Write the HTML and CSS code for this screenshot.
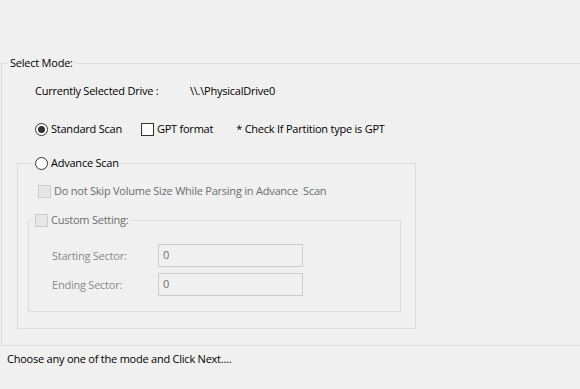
FILE: index.html
```html
<!DOCTYPE html>
<html>
<head>
<title>Select Mode</title>
<link rel="stylesheet" href="styles.css">
</head>
<body>

<div class="page">
  <fieldset class="group mode">
    <legend class="caption">Select Mode:</legend>

    <div class="drive-row">
      <span class="drive-label">Currently Selected Drive :</span>
      <span class="drive-path">\\.\PhysicalDrive0</span>
    </div>

    <div class="scan-row">
      <label class="option">
        <span class="radio checked"></span>
        <span>Standard Scan</span>
      </label>
      <label class="option gpt">
        <span class="check"></span>
        <span>GPT format</span>
      </label>
      <span class="hint">* Check If Partition type is GPT</span>
    </div>

    <fieldset class="group advance">
      <legend class="caption">
        <label class="option">
          <span class="radio"></span>
          <span>Advance Scan</span>
        </label>
      </legend>

      <label class="option disabled skip">
        <span class="check"></span>
        <span>Do not Skip Volume Size While Parsing in Advance&nbsp; Scan</span>
      </label>

      <fieldset class="group custom">
        <legend class="caption">
          <label class="option disabled">
            <span class="check"></span>
            <span>Custom Setting:</span>
          </label>
        </legend>

        <div class="field">
          <span class="field-label">Starting Sector:</span>
          <span class="field-box">0</span>
        </div>
        <div class="field">
          <span class="field-label">Ending Sector:</span>
          <span class="field-box">0</span>
        </div>
      </fieldset>
    </fieldset>
  </fieldset>

  <p class="status">Choose any one of the mode and Click Next....</p>
</div>

</body>
</html>
```

FILE: styles.css
```css
/* Reset */
* {
  margin: 0;
  padding: 0;
  box-sizing: border-box;
}

body {
  font-family: 'Open Sans', 'Noto Sans', sans-serif;
  font-size: 11px;
  line-height: 16px;
  letter-spacing: -0.23px;
  background-color: #f0f0f0;
  color: #000;
  overflow: hidden;
}

.page {
  padding-top: 55px;
}

/* Group boxes */
.group {
  border: 1px solid #dcdcdc;
  min-width: 0;
}

.caption {
  padding: 0 2px;
}

.mode {
  margin-left: 1px;
  width: 600px;
  height: 291px;
}

.mode > .caption {
  margin-left: 6px;
}

/* Drive line */
.drive-row {
  display: flex;
  margin: 12px 0 0 33px;
}

.drive-label {
  width: 155px;
}

/* Scan choice line */
.scan-row {
  display: flex;
  align-items: center;
  margin: 22px 0 0 33px;
}

.option {
  display: flex;
  align-items: center;
  gap: 3px;
}

.gpt {
  margin-left: 19px;
}

.hint {
  margin-left: 23px;
}

/* Radio and check glyphs */
.radio {
  width: 13px;
  height: 13px;
  border: 1px solid #333;
  border-radius: 50%;
  background-color: #fff;
  display: flex;
  align-items: center;
  justify-content: center;
}

.radio.checked::after {
  content: "";
  width: 7px;
  height: 7px;
  border-radius: 50%;
  background-color: #333;
}

.check {
  width: 13px;
  height: 13px;
  border: 1px solid #333;
  background-color: #fff;
}

.disabled {
  color: #6d6d6d;
}

.disabled .check {
  border-color: #cccccc;
  background-color: #e6e6e6;
}

/* Advance scan box */
.advance {
  margin: 18px 0 0 15px;
  width: 399px;
  height: 174px;
}

.advance > .caption {
  margin-left: 15px;
}

.skip {
  margin: 12px 0 0 20px;
}

/* Custom setting box */
.custom {
  margin: 13px 0 0 10px;
  width: 373px;
  height: 100px;
}

.custom > .caption {
  margin-left: 4px;
}

.field {
  display: flex;
  align-items: center;
  margin: 16px 0 0 23px;
}

.field + .field {
  margin-top: 6px;
}

.field-label {
  width: 106px;
  color: #8a8a8a;
}

.field-box {
  width: 145px;
  height: 23px;
  border: 1px solid #cccccc;
  padding: 2px 4px;
  color: #6d6d6d;
}

/* Status line */
.status {
  margin: 5px 0 0 7px;
}
```
